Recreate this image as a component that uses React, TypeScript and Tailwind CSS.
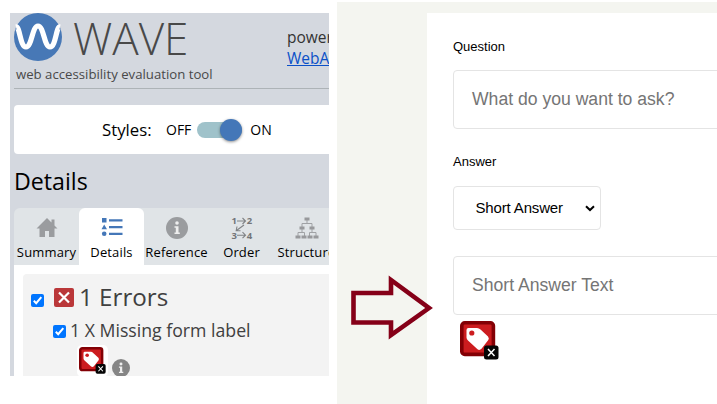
import type { ReactNode } from "react";

function TagIcon({ className }: { className: string }) {
  return (
    <svg viewBox="0 0 39 39" className={className}>
      <rect x="1.800" y="1.800" width="31.600" height="31.600" rx="3" fill="#cc1c1f" stroke="#830005" strokeWidth="3.600" />
      <path
        d="M6.500 9 Q6.500 7 8.500 7 L17 7 Q19 7 20.500 8.500 L28 15.500 Q29.500 17.500 28.300 19 L21.500 27.800 Q19.500 29.800 17.500 28.300 L8 19.500 Q6.500 18 6.500 16.500 Z"
        fill="#fff"
      />
      <circle cx="11.800" cy="12" r="2.600" fill="#cc1c1f" />
      <rect x="24" y="24.500" width="14.500" height="14" rx="2.500" fill="#050505" />
      <path d="M28 28 L34.500 35 M34.500 28 L28 35" stroke="#fff" strokeWidth="1.500" />
    </svg>
  );
}

function InfoIcon({ className }: { className: string }) {
  return (
    <svg viewBox="0 0 22 22" className={className}>
      <circle cx="11" cy="11" r="11" fill="currentColor" />
      <circle cx="11" cy="6" r="1.800" fill="#eee" />
      <path d="M8.500 9.200H12.500V15.500H13.800V17H8.500V15.500H9.800V10.700H8.500Z" fill="#eee" />
    </svg>
  );
}

function Check() {
  return (
    <svg viewBox="0 0 13 13" className="h-[13px] w-[13px] shrink-0">
      <rect width="13" height="13" rx="2" fill="#0075ff" />
      <path d="M2.800 6.800 L5.200 9.200 L10.300 3.200" fill="none" stroke="#fff" strokeWidth="2" />
    </svg>
  );
}

function HomeIcon() {
  return (
    <svg viewBox="0 0 22 22" className="h-[22px] w-[22px]" fill="#9a9c9f">
      <path d="M11 1 L0.500 11.500 H3.500 V20 H9 V14 H13 V20 H18.500 V11.500 H21.500 L18.500 8.500 V2.500 H15.500 V5.500 Z" />
    </svg>
  );
}

function ListIcon() {
  return (
    <svg viewBox="0 0 22 22" className="h-[22px] w-[22px]" fill="#4477b8">
      <path d="M1 1H5.500V5.500H1Z M3.200 7.500L6 12.200H.5Z M8 2.200H21.500V4.500H8Z M8 9H21.500V11.300H8Z M8 15.700H21.500V18H8Z" />
      <circle cx="3.200" cy="16.800" r="2.300" />
    </svg>
  );
}

function OrderIcon() {
  return (
    <svg viewBox="0 0 22 22" className="h-[22px] w-[22px] overflow-visible" fill="none" stroke="#808386" strokeWidth="1.100">
      <g fill="#747679" stroke="none" fontFamily="Open Sans, sans-serif" fontSize="9.500" fontWeight="700">
        <text x="0.500" y="7">1</text>
        <text x="15.800" y="7">2</text>
        <text x="0.500" y="21.500">3</text>
        <text x="15.800" y="21.500">4</text>
      </g>
      <path d="M6 4H14.500 M11.500 1L14.500 4L11.500 7 M13 8L5.500 13.500 M6 9.500L5.200 13.700H9.500 M6 18.200H14.500 M11.500 15.200L14.500 18.200L11.500 21.200" />
    </svg>
  );
}

function StructureIcon() {
  return (
    <svg viewBox="0 0 24 22" className="h-[22px] w-[24px]">
      <path
        d="M12 3V6.500 M7 10V6.500H17V10 M7 11V15 M17 11V15 M3 19V15.500H9.500V19 M14.500 19V15.500H21V19"
        fill="none"
        stroke="#a0a2a5"
        strokeWidth="1"
      />
      <path
        d="M9.500 .5H14.500V3.500H9.500Z M4.500 9.500H9.500V12.500H4.500Z M14.500 9.500H19.500V12.500H14.500Z M.5 18.500H5.500V21.500H.5Z M6.500 18.500H11.500V21.500H6.500Z M12.500 18.500H17.500V21.500H12.500Z M18.500 18.500H23.500V21.500H18.500Z"
        fill="#98999c"
      />
    </svg>
  );
}

function Tab({ label, active, children }: { label: string; active?: boolean; children: ReactNode }) {
  return (
    <div
      className={
        "flex h-[57px] w-[65px] shrink-0 flex-col items-center whitespace-nowrap pt-[9px] text-[13px] leading-[18px] tracking-[0.15px] text-black " +
        (active ? "rounded-t-[6px] bg-white" : "")
      }
    >
      <div className="flex h-[22px] items-center">{children}</div>
      <span className="mt-[4px]">{label}</span>
    </div>
  );
}

function WavePanel() {
  return (
    <section className="mt-[13px] ml-[10px] h-[363px] w-[319px] shrink-0 overflow-hidden bg-[#d4d8df] pl-1 font-['Open_Sans',sans-serif]">
      <header className="flex h-[76px] justify-between border-b border-[#adb3b7]">
        <div className="whitespace-nowrap text-[#494949]">
          <div className="flex h-12 items-center">
            <svg viewBox="0 0 48 48" className="h-12 w-12 shrink-0">
              <circle cx="24" cy="24" r="24" fill="#4778b6" />
              <path
                d="M2 14 C6 13 6 34 12 34 C18 34 18 13 24 13 C30 13 30 34 36 34 C42 34 42 13 46 14"
                fill="none"
                stroke="#fff"
                strokeWidth="5.200"
              />
            </svg>
            <span className="ml-[11px] pt-px text-[44px] leading-[48px] font-light">WAVE</span>
          </div>
          <div className="ml-[2px] pt-[4px] text-[13.200px] leading-[18px]">web accessibility evaluation tool</div>
        </div>
        <div className="mt-[14px] w-[42px] shrink-0 whitespace-nowrap text-[15.500px] leading-[21px] text-[#333]">
          <div>powered by</div>
          <div className="text-[#0b50c8] underline">WebAIM</div>
        </div>
      </header>

      <div className="mt-4 flex h-[49px] items-center rounded-l-[4px] bg-white pl-[88px] text-black">
        <span className="w-[50px] text-[16.800px] whitespace-nowrap">Styles:</span>
        <span className="ml-[14px] text-[14px]">OFF</span>
        <div className="ml-[6px] flex h-4 w-[45px] items-center justify-end rounded-full bg-[#9fc2ca]">
          <div className="h-[22px] w-[22px] rounded-full bg-[#4477b8] shadow-[0_1px_3px_rgba(0,0,0,0.45)]" />
        </div>
        <span className="ml-2 text-[14px]">ON</span>
      </div>

      <h2 className="mt-[10px] h-[44px] text-[23.200px] leading-[34px] text-black">Details</h2>

      <nav className="flex w-[330px] rounded-tl-[6px] bg-[#e0e4e7]">
        <Tab label="Summary"><HomeIcon /></Tab>
        <Tab label="Details" active><ListIcon /></Tab>
        <Tab label="Reference"><InfoIcon className="h-[22px] w-[22px] text-[#9a9c9f]" /></Tab>
        <Tab label="Order"><OrderIcon /></Tab>
        <Tab label="Structure"><StructureIcon /></Tab>
      </nav>

      <div className="h-[112px] bg-white pt-[9px] pl-[9px] text-[#404040]">
        <div className="h-[103px] rounded-tl-[4px] bg-[#f3f3f3] pl-2">
          <div className="flex h-[44px] items-center pt-[3px]">
            <div className="pt-[5px]"><Check /></div>
            <svg viewBox="0 0 20 19" className="ml-[10px] h-[19px] w-5">
              <rect width="20" height="19" rx="2" fill="#ba3739" />
              <path d="M5 4.500L15 14.500M15 4.500L5 14.500" stroke="#fff" strokeWidth="2.200" />
            </svg>
            <span className="ml-[5px] text-[24.200px]">1 Errors</span>
          </div>
          <div className="flex h-[25px] items-center pl-[22px]">
            <div className="pt-[2px]"><Check /></div>
            <span className="ml-[4px] text-[17.700px]">1 X Missing form label</span>
          </div>
          <div className="flex pt-[2px] pl-[46px]">
            <div className="rounded-[5px] bg-white p-[2px]">
              <TagIcon className="h-[27px] w-[27px]" />
            </div>
            <InfoIcon className="mt-[14px] ml-[4px] h-[18px] w-[18px] text-[#858585]" />
          </div>
        </div>
      </div>
    </section>
  );
}

function FormPanel() {
  return (
    <section className="mt-[2px] ml-2 flex h-[402px] w-[380px] shrink-0 bg-[#f4f5f0] font-['Liberation_Sans',Arial,sans-serif]">
      <div className="relative w-[90px] shrink-0">
        <svg viewBox="0 0 82 66" className="absolute top-[273px] left-[14px] h-[66px] w-[82px]">
          <path d="M2.500 18H40V5L78 33L40 60V47.500H2.500Z" fill="none" stroke="#850018" strokeWidth="4.600" />
        </svg>
      </div>
      <div className="mt-[11px] w-[290px] overflow-hidden bg-white pl-[26px]">
        <div className="mt-[25px] h-8 text-[13px] leading-[18px] text-black">Question</div>
        <div className="flex h-[59px] w-[300px] items-center rounded-[4px] border border-[#e4e4e4] pl-[18px] text-[17.600px] text-[#757575]">
          What do you want to ask?
        </div>
        <div className="mt-[24px] h-[33px] text-[13px] leading-[18px] text-black">Answer</div>
        <div className="flex h-[44px] w-[148px] items-center justify-between rounded-[4px] border border-[#e4e4e4] pr-[5px] pl-[21.500px] text-[15px] tracking-[-0.150px] text-black">
          <span>Short Answer</span>
          <svg viewBox="0 0 10 7" className="h-[7px] w-[10px]">
            <path d="M1 1.200L5 5L9 1.200" fill="none" stroke="#000" strokeWidth="2" />
          </svg>
        </div>
        <div className="mt-[26px] flex h-[59px] w-[300px] items-center rounded-[4px] border border-[#e4e4e4] pl-[18px] text-[17.600px] text-[#757575]">
          Short Answer Text
        </div>
        <TagIcon className="mt-[6px] ml-[6.500px] h-[39px] w-[39px]" />
      </div>
    </section>
  );
}

export default function App() {
  return (
    <main className="flex h-[404px] w-[717px] items-start overflow-hidden bg-white">
      <WavePanel />
      <FormPanel />
    </main>
  );
}
